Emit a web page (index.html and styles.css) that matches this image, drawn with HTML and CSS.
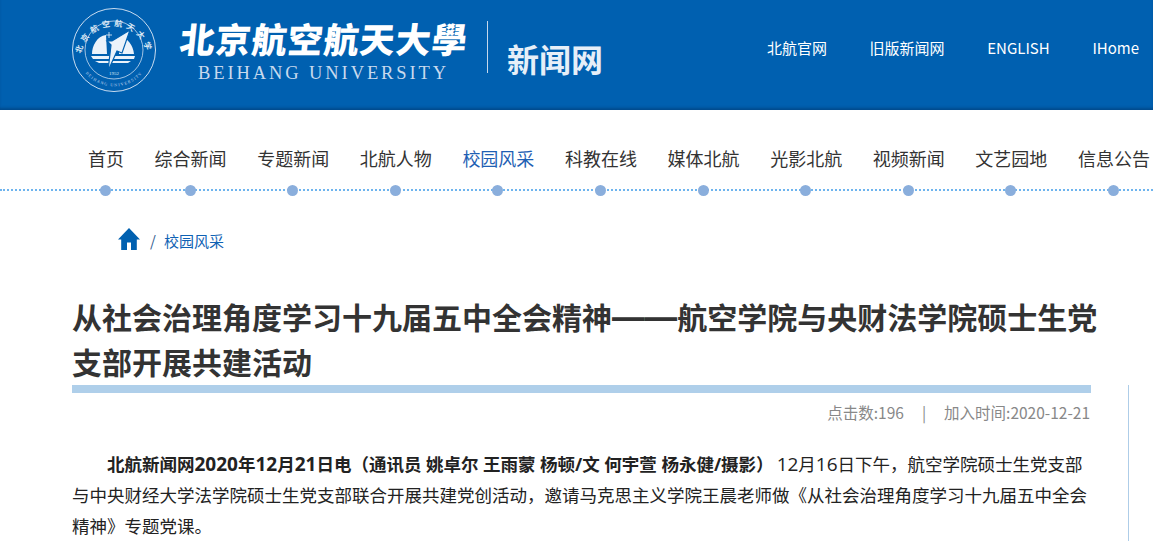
FILE: index.html
```html
<!DOCTYPE html>
<html lang="zh-CN">
<head>
  <meta charset="UTF-8">
  <title>从社会治理角度学习十九届五中全会精神</title>
  <link rel="stylesheet" href="styles.css">
</head>
<body>

<!-- 顶部 -->
<header class="top">
  <div class="brand">
    <svg class="seal" viewBox="0 0 90 90" width="90" height="90">
      <defs>
        <path id="seal-up" d="M11 49 A33.5 33.5 0 0 1 77 49"/>
        <path id="seal-down" d="M7 50 A37.5 37.5 0 0 0 81 50"/>
      </defs>
      <circle cx="44" cy="45" r="41.5" fill="none" stroke="#c9dcf0" stroke-width="1"/>
      <circle cx="44" cy="45" r="29" fill="none" stroke="#c9dcf0" stroke-width="0.8"/>
      <text class="seal-cn"><textPath href="#seal-up" startOffset="50%" text-anchor="middle">北京航空航天大学</textPath></text>
      <text class="seal-en"><textPath href="#seal-down" startOffset="50%" text-anchor="middle">BEIHANG UNIVERSITY</textPath></text>
      <path fill="#eaf2fa" d="M22 49c0-8 5-18 14-19l1 19zM49 31c9 2 14 9 15 18l-15 0z"/>
      <path fill="#eaf2fa" d="M21 51h44l-1 3H23zM25 56h36l-3 2H29z"/>
      <path fill="#eaf2fa" stroke="#0060b0" stroke-width="1.2" d="M60 25 42 36h-5l4 4-3 26 9-20 5 2z"/>
      <path stroke="#eaf2fa" stroke-width="0.8" d="M39 27v6M36 30h6"/>
      <text class="seal-year" x="44" y="70" text-anchor="middle">1952</text>
    </svg>
    <div class="wordmark">
      <div class="wordmark-cn">北京航空航天大學</div>
      <div class="wordmark-en">BEIHANG UNIVERSITY</div>
    </div>
    <div class="brand-line"></div>
    <div class="site-name">新闻网</div>
  </div>
  <nav class="top-links">
    <a>北航官网</a>
    <a>旧版新闻网</a>
    <a>ENGLISH</a>
    <a>IHome</a>
  </nav>
</header>

<!-- 导航 -->
<nav class="menu">
  <a>首页</a>
  <a>综合新闻</a>
  <a>专题新闻</a>
  <a>北航人物</a>
  <a class="active">校园风采</a>
  <a>科教在线</a>
  <a>媒体北航</a>
  <a>光影北航</a>
  <a>视频新闻</a>
  <a>文艺园地</a>
  <a>信息公告</a>
</nav>

<div class="crumb">
  <svg class="home" viewBox="0 0 22 22" width="22" height="22">
    <path fill="#0060b0" d="M11 0 22 11.5H18.8V22H13V14.5H9V22H3.2V11.5H0z"/>
  </svg>
  <span class="sep">/</span>
  <a>校园风采</a>
</div>

<h1 class="title">从社会治理角度学习十九届五中全会精神<span class="dash">——</span>航空学院与央财法学院硕士生党支部开展共建活动</h1>

<div class="columns">
  <article class="article">
    <div class="meta">
      <span>点击数:196</span>
      <span class="meta-sep">|</span>
      <span>加入时间:2020-12-21</span>
    </div>
    <p class="text"><b class="lead">北航新闻网<span class="num">2020</span>年<span class="num">12</span>月<span class="num">21</span>日电（通讯员 姚卓尔 王雨蒙 杨顿/文 何宇萱 杨永健/摄影）</b><span class="num">12</span>月<span class="num">16</span>日下午，航空学院硕士生党支部与中央财经大学法学院硕士生党支部联合开展共建党创活动，邀请马克思主义学院王晨老师做《从社会治理角度学习十九届五中全会精神》专题党课。</p>
  </article>
  <aside class="side"></aside>
</div>

</body>
</html>
```

FILE: styles.css
```css
html, body {
  height: 541px;
  overflow: hidden;
}

body {
  margin: 0;
  font-family: "Noto Sans CJK SC", "Noto Sans", sans-serif;
  color: #333;
  background: #fff;
}

.top {
  height: 110px;
  background: #0060b0;
  box-shadow: inset 0 -3px 3px -1px #004a8c;
  display: flex;
  justify-content: space-between;
  color: #fff;
}

.brand {
  display: flex;
  align-items: flex-start;
  padding-left: 70px;
}

.seal {
  margin-top: 5px;
  display: block;
}

.seal-cn {
  font-size: 8px;
  font-weight: 700;
  fill: #dbe8f5;
  letter-spacing: 3.6px;
}

.seal-en {
  font-family: "Liberation Serif", serif;
  font-size: 4.2px;
  fill: #c9dcf0;
  letter-spacing: 1.1px;
}

.seal-year {
  font-family: "Liberation Serif", serif;
  font-size: 5px;
  fill: #dbe8f5;
}

.wordmark {
  margin-left: 20px;
  width: 307px;
  padding-top: 14px;
}

.wordmark-cn {
  font-family: "Noto Sans CJK TC", sans-serif;
  font-size: 35px;
  font-weight: 900;
  line-height: 48px;
  letter-spacing: 1px;
  white-space: nowrap;
  transform: skewX(-6deg);
}

.wordmark-en {
  font-family: "Liberation Serif", serif;
  font-size: 18.5px;
  line-height: 22px;
  letter-spacing: 2.9px;
  color: #c8daee;
  margin-left: 18px;
  white-space: nowrap;
}

.brand-line {
  width: 1px;
  height: 52px;
  margin-top: 21px;
  background: #c5d8ec;
}

.site-name {
  margin: 36px 0 0 19px;
  font-size: 32px;
  line-height: 44px;
  font-weight: 700;
  color: #e6eff8;
  white-space: nowrap;
}

.top-links {
  display: flex;
  gap: 42.7px;
  padding: 37px 14px 0 0;
  font-size: 15px;
  line-height: 22px;
}

.menu {
  display: flex;
  gap: 30.6px;
  height: 79px;
  padding-left: 88px;
  border-bottom: 2px dotted #6eb4ee;
  font-size: 18px;
  line-height: 28px;
  color: #333;
  white-space: nowrap;
}

.menu a {
  position: relative;
  padding-top: 34px;
}

.menu a::after {
  content: "";
  position: absolute;
  left: 50%;
  bottom: -7px;
  width: 11px;
  height: 11px;
  margin-left: -6px;
  border-radius: 50%;
  background: #8aaedc;
}

.menu .active {
  color: #1f5fb4;
}

.crumb {
  display: flex;
  align-items: center;
  padding: 39px 0 0 118px;
  font-size: 15px;
  line-height: 22px;
  color: #0f62b4;
}

.home {
  display: block;
  margin-top: -4px;
}

.sep {
  margin: 0 8px 0 10px;
  color: #33608f;
}

.title {
  margin: 42px 0 0 72px;
  width: 1040px;
  font-size: 30px;
  line-height: 45px;
  font-weight: 700;
  color: #333;
}

.dash {
  font-family: "Inter", sans-serif;
  font-size: 32.6px;
  line-height: 0;
}

.columns {
  display: flex;
  padding-left: 72px;
  margin-top: 1px;
}

.article {
  width: 1019px;
  border-top: 8px solid #afcfea;
}

.meta {
  display: flex;
  justify-content: flex-end;
  gap: 18px;
  padding-top: 8px;
  padding-right: 1px;
  font-size: 15.5px;
  line-height: 22px;
  color: #888;
}

.text {
  margin: 26px 0 0;
  font-family: "Open Sans", "Noto Sans CJK SC", sans-serif;
  font-size: 17.5px;
  line-height: 31px;
  text-indent: 2em;
  color: #222;
}

.num {
  font-size: 19px;
}

.lead {
  margin-right: 3px;
}

.side {
  width: 0;
  margin-left: 37px;
  height: 156px;
  border-left: 1px solid #aecde8;
}
```
